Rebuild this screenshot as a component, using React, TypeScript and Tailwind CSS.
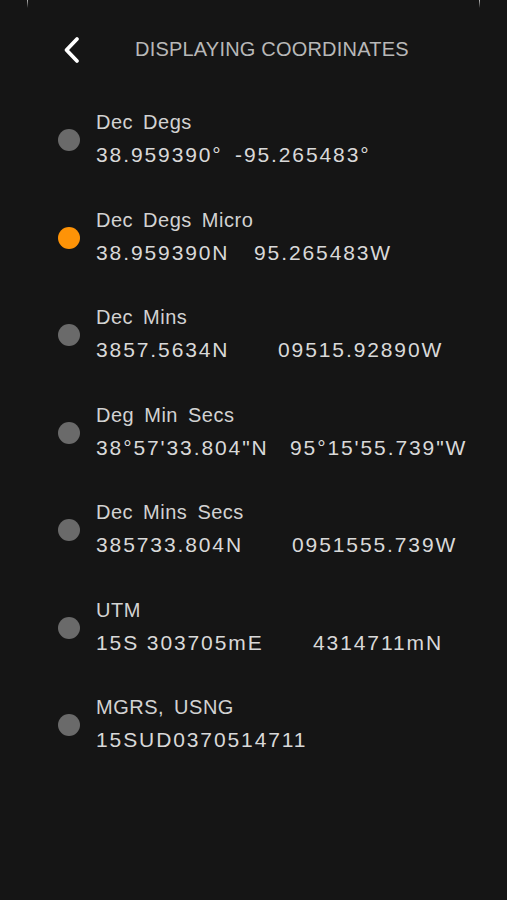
const rows = [
  { label: 'Dec Degs', a: '38.959390°', b: '-95.265483°', w: 'w-[139px]' },
  { label: 'Dec Degs Micro', a: '38.959390N', b: '95.265483W', w: 'w-[158px]', active: true },
  { label: 'Dec Mins', a: '3857.5634N', b: '09515.92890W', w: 'w-[182px]' },
  { label: 'Deg Min Secs', a: '38°57\'33.804"N', b: '95°15\'55.739"W', w: 'w-[194px]' },
  { label: 'Dec Mins Secs', a: '385733.804N', b: '0951555.739W', w: 'w-[196px]' },
  { label: 'UTM', a: '15S 303705mE', b: '4314711mN', w: 'w-[217px]' },
  { label: 'MGRS, USNG', a: '15SUD0370514711', b: '', w: 'w-auto' },
]

function Chevron() {
  return (
    <svg width="18" height="28" viewBox="0 0 18 28" fill="none">
      <path d="M15 3 L4.5 14 L15 25" stroke="#ffffff" strokeWidth="3.8" strokeLinecap="round" strokeLinejoin="round" />
    </svg>
  )
}

export default function App() {
  return (
    <div className="relative min-h-[900px] w-full bg-[#151515] font-['Liberation_Sans',Arial,sans-serif] overflow-hidden">
      {/* faint frame marks */}
      <div className="absolute left-[27px] top-0 h-[8px] w-px bg-gradient-to-b from-white/70 to-transparent" />
      <div className="absolute left-[479px] top-0 h-[8px] w-px bg-gradient-to-b from-white/70 to-transparent" />

      <div className="flex items-start pt-[36px]">
        <div className="ml-[62px] h-[28px] w-[18px]">
          <Chevron />
        </div>
        <h1 className="ml-[55px] mt-px text-[20px] leading-[24px] tracking-[0.2px] text-[#b8b8b8]">
          DISPLAYING COORDINATES
        </h1>
      </div>

      <div className="mt-[46px] flex flex-col">
        {rows.map(r => (
          <div key={r.label} className="flex h-[97.5px] items-start pl-[58px]">
            <div
              className={
                r.active
                  ? 'mt-[19px] h-[22px] w-[22px] shrink-0 rounded-full bg-[#fe9307]'
                  : 'mt-[19px] h-[22px] w-[22px] shrink-0 rounded-full bg-[#6a6a6a]'
              }
            />
            <div className="ml-[16px] flex flex-col">
              <div className="text-[20px] leading-[24px] tracking-[0.5px] [word-spacing:4px] text-[#d2d2d2] whitespace-nowrap">
                {r.label}
              </div>
              <div className="mt-[8px] flex text-[21px] leading-[26px] tracking-[1.9px] text-[#d9d9d9] whitespace-nowrap">
                <span className={r.w}>{r.a}</span>
                {r.b ? <span>{r.b}</span> : null}
              </div>
            </div>
          </div>
        ))}
      </div>
    </div>
  )
}
